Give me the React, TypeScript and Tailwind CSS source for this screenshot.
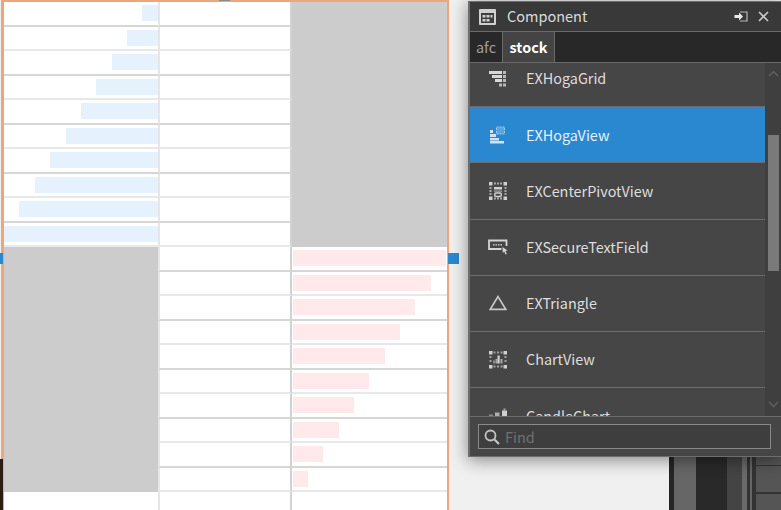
import React from "react";

const blue = [16, 31, 46, 62, 77, 92, 108, 123, 139, 154];
const pink = [153, 138, 122, 107, 92, 76, 61, 46, 30, 15];

function Cell({ gray, bar, side, dark }: { gray: boolean; bar?: number; side: "l" | "r"; dark: boolean }) {
  if (gray) return <div className="h-full bg-[#cccccc]" />;
  return (
    <div className={`h-full flex flex-col justify-center bg-white border-b-2 ${dark ? "border-[#d6d6d6]" : "border-[#e8e8e8]"} ${side === "l" ? "items-end" : "items-start pl-px"}`}>
      {bar ? <div className={`h-4 ${side === "l" ? "bg-[#e5f2fe]" : "bg-[#ffe9eb]"}`} style={{ width: bar }} /> : null}
    </div>
  );
}

function Row({ i }: { i: number }) {
  const dark = i % 2 === 0;
  const isTop = i < 10;
  return (
    <div className="grid grid-cols-[154px_134px_155px] h-[24.5px] shrink-0">
      <Cell side="l" gray={!isTop && i < 20} bar={isTop ? blue[i] : undefined} dark={dark} />
      <div className={`h-full bg-white border-l-2 border-b-2 border-r-2 border-l-[#e6e6e6] border-r-[#d2d2d2] ${dark ? "border-b-[#d6d6d6]" : "border-b-[#e8e8e8]"}`} />
      <Cell side="r" gray={isTop} bar={!isTop && i < 20 ? pink[i - 10] : undefined} dark={dark} />
    </div>
  );
}

function HogaGridIcon() {
  return (
    <svg width="18" height="18" viewBox="0 0 18 18" fill="#d8d8d8">
      <rect x="0" y="1" width="13" height="3" />
      <rect x="14" y="1" width="3" height="3" fill="#b8b8b8" />
      <rect x="3" y="5" width="10" height="3" />
      <rect x="14" y="5" width="3" height="3" fill="#b8b8b8" />
      <rect x="6" y="9" width="7" height="3" />
      <rect x="14" y="9" width="3" height="3" fill="#b8b8b8" />
      <rect x="10" y="13.5" width="3" height="3" fill="#b8b8b8" />
      <rect x="14" y="13.5" width="3" height="3" fill="#b8b8b8" />
    </svg>
  );
}
function HogaViewIcon() {
  return (
    <svg width="18" height="18" viewBox="0 0 18 18" fill="#cfe3f3">
      <rect x="1" y="4" width="3" height="3" />
      <rect x="1" y="8" width="6" height="3" />
      <rect x="1" y="12" width="9" height="2.5" />
      <rect x="1" y="15" width="14" height="2.5" />
      <rect x="7.5" y="1" width="8" height="7" fill="#5aa5df" stroke="#9cc9ec" strokeDasharray="2 1" />
    </svg>
  );
}
function PivotIcon() {
  return (
    <svg width="18" height="18" viewBox="0 0 18 18" fill="#d0d0d0">
      <rect x="0" y="0" width="3.5" height="3.5" />
      <rect x="14.5" y="0" width="3.5" height="3.5" />
      <rect x="0" y="14.5" width="3.5" height="3.5" />
      <rect x="14.5" y="14.5" width="3.5" height="3.5" />
      <rect x="5" y="0.5" width="2" height="2" fill="#a8a8a8" />
      <rect x="8" y="0.5" width="2" height="2" fill="#a8a8a8" />
      <rect x="11" y="0.5" width="2" height="2" fill="#a8a8a8" />
      <rect x="0.5" y="5" width="2" height="2" fill="#a8a8a8" />
      <rect x="0.5" y="8" width="2" height="2" fill="#a8a8a8" />
      <rect x="0.5" y="11" width="2" height="2" fill="#a8a8a8" />
      <rect x="15.5" y="5" width="2" height="2" fill="#a8a8a8" />
      <rect x="15.5" y="8" width="2" height="2" fill="#a8a8a8" />
      <rect x="15.5" y="11" width="2" height="2" fill="#a8a8a8" />
      <rect x="5" y="15.5" width="2" height="2" fill="#a8a8a8" />
      <rect x="8" y="15.5" width="2" height="2" fill="#a8a8a8" />
      <rect x="11" y="15.5" width="2" height="2" fill="#a8a8a8" />
      <rect x="5" y="5" width="8" height="2.5" />
      <rect x="5" y="8.5" width="8" height="1.2" fill="#a8a8a8" />
      <rect x="5.8" y="11" width="6.4" height="3.6" rx="1" fill="none" stroke="#d0d0d0" strokeWidth="1.5" />
    </svg>
  );
}
function SecureIcon() {
  return (
    <svg width="20" height="16" viewBox="0 0 20 16" fill="none">
      <path d="M13.5 10H1V1.5H18.5V7" stroke="#d4d4d4" strokeWidth="1.8" />
      <rect x="5" y="5" width="1.5" height="1.6" fill="#bdbdbd" />
      <rect x="7.5" y="5" width="1.5" height="1.6" fill="#bdbdbd" />
      <rect x="10" y="5" width="1.5" height="1.6" fill="#bdbdbd" />
      <rect x="12.5" y="5" width="1.5" height="1.6" fill="#bdbdbd" />
      <path d="M14.5 8L19.5 11.5L17.5 12L18.8 15L17.5 15.5L16.2 12.6L14.8 14Z" fill="#d4d4d4" />
    </svg>
  );
}
function TriangleIcon() {
  return (
    <svg width="18" height="16" viewBox="0 0 18 16" fill="none">
      <path d="M9 1.6L16.8 14.4H1.2Z" stroke="#c8c8c8" strokeWidth="1.7" />
    </svg>
  );
}
function ChartIcon() {
  return (
    <svg width="18" height="18" viewBox="0 0 18 18" fill="#d0d0d0">
      <rect x="0" y="0" width="3.5" height="3.5" />
      <rect x="14.5" y="0" width="3.5" height="3.5" />
      <rect x="0" y="14" width="3.5" height="3.5" />
      <rect x="14.5" y="14" width="3.5" height="3.5" />
      <rect x="4.5" y="0.5" width="2" height="2" fill="#a0a0a0" />
      <rect x="8" y="0.5" width="2" height="2" fill="#a0a0a0" />
      <rect x="11.5" y="0.5" width="2" height="2" fill="#a0a0a0" />
      <rect x="4.5" y="14.5" width="2" height="2" fill="#a0a0a0" />
      <rect x="8" y="14.5" width="2" height="2" fill="#a0a0a0" />
      <rect x="11.5" y="14.5" width="2" height="2" fill="#a0a0a0" />
      <rect x="0.5" y="5" width="2" height="2" fill="#a0a0a0" />
      <rect x="0.5" y="9" width="2" height="2" fill="#a0a0a0" />
      <rect x="15.5" y="5" width="2" height="2" fill="#a0a0a0" />
      <rect x="15.5" y="9" width="2" height="2" fill="#a0a0a0" />
      <rect x="4" y="9.5" width="2" height="3" fill="#8a8a8a" />
      <rect x="6.5" y="8" width="2" height="4.5" fill="#a8a8a8" />
      <rect x="8.5" y="4.5" width="2.2" height="8" />
      <rect x="11.5" y="8" width="2" height="4.5" fill="#a8a8a8" />
    </svg>
  );
}
function CandleIcon() {
  return (
    <svg width="19" height="18" viewBox="0 0 19 18" fill="#cfcfcf">
      <rect x="0" y="7.5" width="4" height="6" fill="#8a8a8a" />
      <rect x="6" y="5.5" width="4.5" height="8" fill="#b0b0b0" />
      <rect x="13" y="3.5" width="5" height="10" />
      <rect x="14.5" y="1.5" width="2" height="2" fill="#a8a8a8" />
    </svg>
  );
}

const items: { name: string; icon: React.ReactNode; on?: boolean }[] = [
  { name: "EXHogaGrid", icon: <HogaGridIcon /> },
  { name: "EXHogaView", icon: <HogaViewIcon />, on: true },
  { name: "EXCenterPivotView", icon: <PivotIcon /> },
  { name: "EXSecureTextField", icon: <SecureIcon /> },
  { name: "EXTriangle", icon: <TriangleIcon /> },
  { name: "ChartView", icon: <ChartIcon /> },
  { name: "CandleChart", icon: <CandleIcon /> },
];

export default function App() {
  return (
    <div
      className="relative w-[781px] h-[510px] overflow-hidden bg-[#f0f0f0] flex"
      style={{ fontFamily: '"Noto Sans CJK KR", "Noto Sans", sans-serif' }}
    >
      {/* design canvas */}
      <div className="ml-px w-[448px] h-[510px] shrink-0 bg-white border-t-2 border-l-[3px] border-r-2 border-[#eda67c] flex flex-col">
        {Array.from({ length: 20 }).map((_, i) => (
          <Row key={i} i={i} />
        ))}
        <div className="flex-1 grid grid-cols-[154px_134px_155px]">
          <div />
          <div className="border-l-2 border-r-2 border-l-[#e6e6e6] border-r-[#d2d2d2]" />
          <div />
        </div>
      </div>

      {/* selection handles */}
      <div className="absolute left-0 top-[253px] w-[3px] h-[11px] bg-[#2a88d0]" />
      <div className="absolute left-[448px] top-[253px] w-[11px] h-[11px] bg-[#2a88d0]" />
      <div className="absolute left-[219px] top-0 w-[11px] h-px bg-[#8a8a8a]" />

      {/* left edge dark strip */}
      <div className="absolute left-0 top-[459px] w-[3px] h-[51px] bg-[#2b1d12]" />

      {/* dark backdrop bottom right */}
      <div className="absolute left-[669px] top-[457px] w-[112px] h-[53px] flex bg-[#2a2a2a]">
        <div className="w-[5px] bg-[#262626]" />
        <div className="w-[22px] bg-[#666666]" />
        <div className="w-[31px] bg-[#292929]" />
        <div className="w-[15px] bg-[#444444]" />
        <div className="w-[5px] bg-[#6a6a6a]" />
        <div className="w-[3px] bg-[#333333]" />
        <div className="w-[2px] bg-[#666666]" />
        <div className="w-[4px] bg-[#333333]" />
        <div className="flex-1 flex flex-col bg-[#555555]">
          <div className="h-[9px] border-b border-[#333333]" />
          <div className="h-[28px] border-b-2 border-[#333333]" />
        </div>
      </div>

      {/* floating component window */}
      <div className="absolute left-[468px] top-[1px] w-[313px] h-[456px] bg-[#464646] border-2 border-t border-b border-[#6e6e6e] border-r-0 shadow-[0_3px_16px_rgba(0,0,0,0.45)] flex flex-col">
        <div className="h-[30px] shrink-0 bg-[#393939] border-b border-[#6a6a6a] flex items-center pl-[9px] pr-[12px] text-[#dcdcdc]">
          <svg width="17" height="16" viewBox="0 0 17 16" className="shrink-0">
            <rect x="0" y="0" width="17" height="16" rx="1" fill="#d0d0d0" />
            <rect x="2" y="4" width="13" height="10" fill="#3e3e3e" />
            <rect x="3.5" y="6" width="3" height="2.5" fill="#d0d0d0" />
            <rect x="7.5" y="6" width="3" height="2.5" fill="#d0d0d0" />
            <rect x="11.5" y="6" width="2" height="2.5" fill="#d0d0d0" />
            <rect x="3.5" y="10" width="3" height="2.5" fill="#d0d0d0" />
            <rect x="7.5" y="10" width="3" height="2.5" fill="#d0d0d0" />
          </svg>
          <span className="ml-[11px] text-[14.5px] leading-none">Component</span>
          <div className="ml-auto flex items-center gap-[10px]">
            <svg width="14" height="11" viewBox="0 0 14 11" fill="none">
              <path d="M6 1H13V10H6" stroke="#b8b8b8" strokeWidth="1.2" />
              <path d="M0.5 4H5V1.5L9 5.5L5 9.5V7H0.5Z" fill="#e8e8e8" />
            </svg>
            <svg width="11" height="11" viewBox="0 0 11 11" fill="none">
              <path d="M1 1L10 10M10 1L1 10" stroke="#c8c8c8" strokeWidth="1.6" />
            </svg>
          </div>
        </div>
        <div className="h-[31px] shrink-0 bg-[#282828] border-b border-[#6a6a6a] flex">
          <div className="w-[33px] flex items-center justify-center text-[14.4px] text-[#a0a0a0] border-r border-[#6a6a6a] pb-[1px]">afc</div>
          <div className="w-[52px] flex items-center justify-center bg-[#444444] text-[14.4px] font-bold text-white border-r border-[#6a6a6a] pb-[1px]">stock</div>
        </div>
        <div className="flex-1 min-h-0 flex overflow-hidden">
          <div className="w-[295px] shrink-0 overflow-hidden">
            <div className="mt-[-12px]">
              {items.map((it) => (
                <div
                  key={it.name}
                  className={`h-[56.2px] flex items-center pl-[18px] border-b border-[#6c6c6c] ${it.on ? "bg-[#2a88d0] text-[#e8f0f6]" : "text-[#dedede]"}`}
                >
                  <div className="w-[20px] h-[20px] flex items-center justify-center shrink-0">{it.icon}</div>
                  <span className="ml-[18px] text-[14.4px] leading-none">{it.name}</span>
                </div>
              ))}
            </div>
          </div>
          <div className="flex-1 bg-[#3f3f3f] flex flex-col items-center">
            <svg width="11" height="7" viewBox="0 0 11 7" fill="none" className="mt-[7px]">
              <path d="M1 6L5.5 1.5L10 6" stroke="#5f5f5f" strokeWidth="1.5" />
            </svg>
            <div className="mt-[58px] w-[11px] h-[136px] bg-[#7a7a7a]" />
            <svg width="11" height="7" viewBox="0 0 11 7" fill="none" className="mt-auto mb-[8px]">
              <path d="M1 1L5.5 5.5L10 1" stroke="#5f5f5f" strokeWidth="1.5" />
            </svg>
          </div>
        </div>
        <div className="h-[40px] shrink-0 border-t border-[#6c6c6c] bg-[#464646] pl-[8px] pr-[10px] flex items-center">
          <div className="w-full h-[25px] border border-[#8a8a8a] bg-[#3e3e3e] flex items-center pl-[5px]">
            <svg width="16" height="16" viewBox="0 0 16 16" fill="none">
              <circle cx="6.5" cy="6.5" r="5" stroke="#c4c4c4" strokeWidth="1.8" />
              <path d="M10.5 10.5L15 15" stroke="#c4c4c4" strokeWidth="2.2" />
            </svg>
            <span className="ml-[5px] text-[14.4px] leading-none text-[#707070] translate-y-px">Find</span>
          </div>
        </div>
      </div>
    </div>
  );
}
